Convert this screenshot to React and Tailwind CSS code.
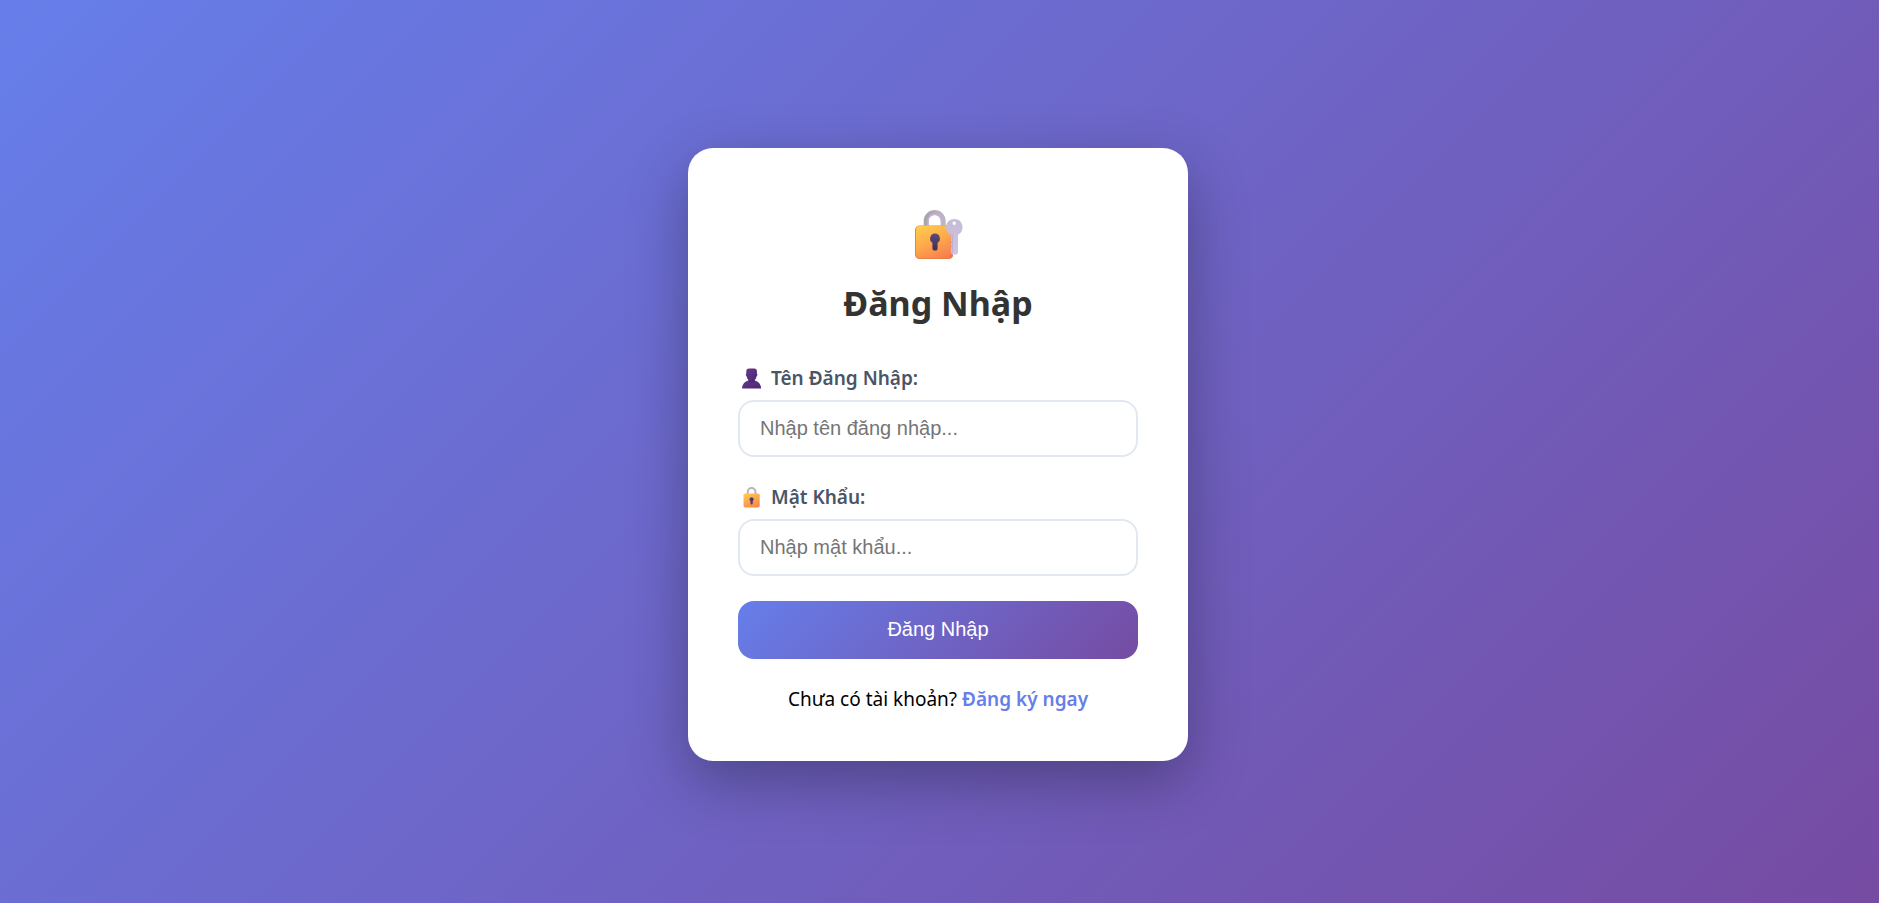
import React from "react";

function LockWithKey() {
  return (
    <svg viewBox="-2 -2 80 64" className="mx-auto block h-16 w-20" aria-hidden="true">
      <defs>
        <linearGradient id="lk-body" x1="0.2" y1="0" x2="0.7" y2="1">
          <stop offset="0" stopColor="#ffca4b" />
          <stop offset="0.5" stopColor="#fda94b" />
          <stop offset="1" stopColor="#f8804f" />
        </linearGradient>
        <linearGradient id="lk-shackle" x1="0" y1="0" x2="1" y2="0">
          <stop offset="0" stopColor="#a9a5ad" />
          <stop offset="1" stopColor="#bcb6c4" />
        </linearGradient>
        <linearGradient id="lk-hole" x1="0" y1="0" x2="0" y2="1">
          <stop offset="0" stopColor="#5b4a78" />
          <stop offset="1" stopColor="#3f2d5c" />
        </linearGradient>
        <linearGradient id="lk-key" x1="0" y1="0" x2="0" y2="1">
          <stop offset="0" stopColor="#c5bcd6" />
          <stop offset="1" stopColor="#d2c3e3" />
        </linearGradient>
      </defs>
      <path d="M26.2 27V21a8.5 8.5 0 0 1 17 0v6" fill="none" stroke="url(#lk-shackle)" strokeWidth="5" />
      <path d="M28 26v-5a6.7 6.7 0 0 1 13.4 0v5" fill="none" stroke="#c9b3dc" strokeWidth="1.2" />
      <rect x="15" y="25.5" width="38" height="33.5" rx="4.5" fill="#e98145" />
      <rect x="16" y="25.5" width="37" height="32.6" rx="4" fill="url(#lk-body)" />
      <path d="M50.5 34v20.500l-1.500 4.500c2.600 0 4.500-1.800 4.500-4.500V34z" fill="#d9694c" opacity="0.35" />
      <path d="M35 33.500a5 5 0 0 0-2.600 9.200V48a2.600 2.600 0 0 0 5.200 0v-5.300A5 5 0 0 0 35 33.500z" fill="url(#lk-hole)" />
      <path
        fillRule="evenodd"
        d="M54.200 19a8.300 8.300 0 0 0-3.400 15.800v6.400l1 1-1 1.200v2.200l1 1-1 1.200v5.200l1.700 1.500h4.200l1.300-1.500V34.700A8.300 8.300 0 0 0 54.200 19zm0 2.600a1.700 1.700 0 1 1 0 3.400 1.700 1.700 0 0 1 0-3.400z"
        fill="url(#lk-key)"
      />
      <path d="M52.300 35v17.500" stroke="#b3a3ca" strokeWidth="0.8" />
    </svg>
  );
}

function Person() {
  return (
    <svg viewBox="0 1 27 27" className="h-[27px] w-[27px]" aria-hidden="true">
      <defs>
        <linearGradient id="ps-body" x1="0" y1="0" x2="1" y2="1">
          <stop offset="0" stopColor="#643a8c" />
          <stop offset="1" stopColor="#4a2673" />
        </linearGradient>
      </defs>
      <path d="M4 24.400c.3-4.800 3.400-7.400 7-8.200h5.200c3.600.8 6.600 3.400 6.900 8.200z" fill="url(#ps-body)" />
      <path
        d="M11 4.600h5.200c1.800 0 2.700 1.100 2.700 2.600v2.200c.7.300.6 2.300-.2 2.700-.3 1.900-1.100 3.200-2.100 4.100v1.400c-1.200 1.100-4.800 1.100-6 0v-1.400c-1-.9-1.800-2.200-2.100-4.100-.8-.4-.9-2.400-.2-2.700V7.200c0-1.500.9-2.600 2.700-2.600z"
        fill="url(#ps-body)"
      />
      <path d="M10.600 16.200c1.700 1.200 4.300 1.200 6 0v1.400c-1.200 1.100-4.800 1.100-6 0z" fill="#47276d" />
    </svg>
  );
}

function Padlock() {
  return (
    <svg viewBox="0 1 27 27" className="h-[27px] w-[27px]" aria-hidden="true">
      <defs>
        <linearGradient id="pl-body" x1="0.2" y1="0" x2="0.7" y2="1">
          <stop offset="0" stopColor="#ffc94c" />
          <stop offset="1" stopColor="#f9854f" />
        </linearGradient>
      </defs>
      <path d="M9.700 12V9a3.900 3.900 0 0 1 7.800 0v3" fill="none" stroke="#b9b2c2" strokeWidth="2" />
      <rect x="5.500" y="10.500" width="16.200" height="14" rx="1.800" fill="url(#pl-body)" />
      <path d="M13.600 14.300a2.100 2.100 0 0 0-1.100 3.900v2.300a1.100 1.100 0 0 0 2.200 0v-2.300a2.100 2.100 0 0 0-1.100-3.900z" fill="#4c3a69" />
    </svg>
  );
}

function Field({ id, label, icon, type, placeholder }) {
  return (
    <div className="mb-[25px]">
      <label htmlFor={id} className="mb-[7px] flex items-center gap-1.5 text-[19px] leading-[30px] font-semibold text-[#4a5568]">
        {icon}
        {label}
      </label>
      <input
        id={id}
        type={type}
        placeholder={placeholder}
        className="block h-[57px] w-full rounded-2xl border-2 border-[#e2e8f0] bg-white px-5 font-['Liberation_Sans',Arial,sans-serif] text-xl text-[#333] outline-none placeholder:text-[#757575] focus:border-[#667eea]"
      />
    </div>
  );
}

export default function App() {
  return (
    <main className="flex min-h-screen items-center justify-center bg-[linear-gradient(135deg,#667eea_0%,#764ba2_100%)] py-5 pr-[23px] pl-5 font-['Noto_Sans','Open_Sans',sans-serif] text-black">
      <section className="mt-1.5 w-full max-w-[500px] rounded-[25px] bg-white p-[50px] shadow-[0_20px_60px_rgba(0,0,0,0.3)]">
        <header className="mb-9 text-center">
          <LockWithKey />
          <h1 className="mt-[17px] text-[34px] leading-[48px] font-bold text-[#333]">Đăng Nhập</h1>
        </header>
        <form onSubmit={(e) => e.preventDefault()}>
          <Field id="username" label="Tên Đăng Nhập:" icon={<Person />} type="text" placeholder="Nhập tên đăng nhập..." />
          <Field id="password" label="Mật Khẩu:" icon={<Padlock />} type="password" placeholder="Nhập mật khẩu..." />
          <button
            type="submit"
            className="block h-[58px] w-full cursor-pointer rounded-2xl bg-[linear-gradient(135deg,#667eea_0%,#764ba2_100%)] pb-0.5 font-['Liberation_Sans',Arial,sans-serif] text-xl text-white"
          >
            Đăng Nhập
          </button>
        </form>
        <p className="mt-7 text-center text-[19px] leading-6">
          Chưa có tài khoản?{" "}
          <a href="#register" className="font-semibold text-[#667eea]">
            Đăng ký ngay
          </a>
        </p>
      </section>
    </main>
  );
}
